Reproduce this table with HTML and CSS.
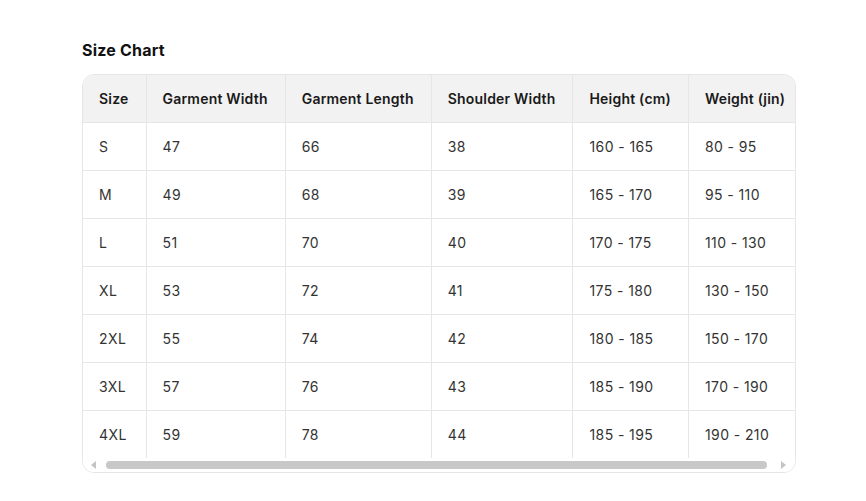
FILE: index.html
```html
<!DOCTYPE html>
<html>
<head>
<meta charset="utf-8">
<link rel="stylesheet" href="styles.css">
</head>
<body>
<div class="wrap">
  <h2 class="title">Size Chart</h2>
  <div class="scroller">
    <div class="viewport">
      <table class="chart">
        <thead>
          <tr><th>Size</th><th>Garment Width</th><th>Garment Length</th><th>Shoulder Width</th><th>Height (cm)</th><th>Weight (jin)</th></tr>
        </thead>
        <tbody>
          <tr><td>S</td><td>47</td><td>66</td><td>38</td><td>160 - 165</td><td>80 - 95</td></tr>
          <tr><td>M</td><td>49</td><td>68</td><td>39</td><td>165 - 170</td><td>95 - 110</td></tr>
          <tr><td>L</td><td>51</td><td>70</td><td>40</td><td>170 - 175</td><td>110 - 130</td></tr>
          <tr><td>XL</td><td>53</td><td>72</td><td>41</td><td>175 - 180</td><td>130 - 150</td></tr>
          <tr><td>2XL</td><td>55</td><td>74</td><td>42</td><td>180 - 185</td><td>150 - 170</td></tr>
          <tr><td>3XL</td><td>57</td><td>76</td><td>43</td><td>185 - 190</td><td>170 - 190</td></tr>
          <tr><td>4XL</td><td>59</td><td>78</td><td>44</td><td>185 - 195</td><td>190 - 210</td></tr>
        </tbody>
      </table>
    </div>
    <div class="hbar" aria-hidden="true">
      <span class="arrow arrow-left"></span>
      <span class="thumb"></span>
      <span class="arrow arrow-right"></span>
    </div>
  </div>
</div>
</body>
</html>
```
FILE: styles.css
```css
* { box-sizing: border-box; }
body {
  margin: 0;
  background: #fff;
  font-family: Inter, "Liberation Sans", sans-serif;
  color: #222;
}
.wrap {
  padding: 40px 70px 0 82px;
}
.title {
  margin: 0 0 14px;
  font-size: 16px;
  font-weight: 700;
  line-height: 20px;
  letter-spacing: 0.2px;
  color: #111;
}
.scroller {
  width: 714px;
  border: 1px solid #e6e6e6;
  border-radius: 12px;
  overflow: hidden;
}
.viewport {
  overflow: hidden;
}
.hbar {
  display: flex;
  align-items: center;
  height: 14px;
  padding: 0 9px 1px 8px;
  background: #fff;
}
.thumb {
  flex: 1;
  height: 8px;
  margin: 0 14px 0 10px;
  border-radius: 4px;
  background: #c8c8c8;
}
.arrow {
  width: 0;
  height: 0;
  border-top: 4px solid transparent;
  border-bottom: 4px solid transparent;
}
.arrow-left {
  border-right: 5px solid #c4c4c4;
}
.arrow-right {
  border-left: 5px solid #c4c4c4;
}
.chart {
  border-collapse: collapse;
  white-space: nowrap;
  font-size: 14px;
}
.chart th, .chart td {
  height: 47.9px;
  padding: 0 17px 0 16px;
  text-align: left;
  border-right: 1px solid #e6e6e6;
  border-bottom: 1px solid #e6e6e6;
}
.chart tbody tr:last-child td { border-bottom: none; }
.chart th {
  background: #f2f2f2;
  font-weight: 600;
  color: #1a1a1a;
  letter-spacing: 0.2px;
}
.chart td {
  color: #333;
  font-weight: 400;
  letter-spacing: 0.4px;
}
```
